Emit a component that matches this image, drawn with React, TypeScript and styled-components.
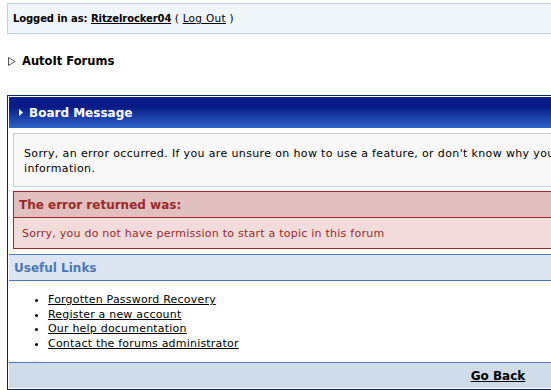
import React from 'react';
import styled, { createGlobalStyle } from 'styled-components';

const GlobalStyle = createGlobalStyle`
  html, body {
    margin: 0;
    padding: 0;
    overflow: hidden;
    background: #ffffff;
  }
  body {
    font-family: "DejaVu Sans", Verdana, sans-serif;
    font-size: 11px;
    color: #000;
  }
`;

const Page = styled.div`
  width: 980px;
  padding: 3px 0 0 7px;
`;

const UserBar = styled.div`
  height: 29px;
  line-height: 29px;
  padding: 0 5px;
  background: #f0f5fa;
  border: 1px solid #c2cfdf;
  font-size: 10.5px;
  letter-spacing: 0.2px;
`;

const Strong = styled.b`
  font-size: 10px;
  font-weight: bold;
  letter-spacing: -0.1px;
`;

const Link = styled.a<{ $bold?: boolean }>`
  color: #000;
  text-decoration: underline;
  font-weight: ${(p) => (p.$bold ? 'bold' : 'normal')};
  font-size: ${(p) => (p.$bold ? '10px' : '10.5px')};
  letter-spacing: ${(p) => (p.$bold ? '-0.1px' : '0.3px')};
`;

const ForumTitle = styled.div`
  display: flex;
  align-items: center;
  gap: 6px;
  margin: 18px 0 0 1px;
  height: 18px;
  font-size: 11.5px;
  font-weight: bold;
  color: #000;
`;

const Triangle = styled.svg`
  width: 8px;
  height: 9px;
`;

const Board = styled.div`
  margin-top: 25px;
  border: 1px solid #072a66;
  border-bottom-width: 2px;
  padding: 1px;
`;

const BoardHeader = styled.div`
  display: flex;
  align-items: center;
  gap: 6px;
  height: 31px;
  padding-left: 10px;
  background: linear-gradient(to bottom, #0c1f8f 0%, #071a86 30%, #2d62c6 100%);
  color: #fff;
  font-size: 12px;
  font-weight: bold;
`;

const Inner = styled.div`
  padding: 5px 0 0 4px;
`;

const MessageBox = styled.div`
  background: #f8f8f8;
  border: 1px solid #cccccc;
  border-right: none;
  padding: 12px 10px 10px 10px;
  line-height: 15px;
  letter-spacing: 0.36px;
`;

const ErrorBox = styled.div`
  margin-top: 4px;
  border: 1px solid #9a2a2a;
  border-right: none;
  color: #9a2a2a;
`;

const ErrorTitle = styled.div`
  display: flex;
  align-items: center;
  height: 25px;
  padding-left: 5px;
  background: #e2c0bf;
  border-bottom: 1px solid #9a2a2a;
  font-size: 12px;
  font-weight: bold;
`;

const ErrorText = styled.div`
  display: flex;
  align-items: center;
  height: 30px;
  padding-left: 8px;
  background: #f2dcdb;
  letter-spacing: 0.24px;
`;

const LinksHeader = styled.div`
  display: flex;
  align-items: center;
  margin-top: 5px;
  height: 25px;
  padding-left: 5px;
  background: #dde5f3;
  border-top: 1px solid #4e77c2;
  border-bottom: 1px solid #4e77c2;
  color: #4c77b6;
  font-size: 12px;
  font-weight: bold;
`;

const LinkList = styled.ul`
  margin: 0;
  padding: 12px 0 0 39px;
  height: 69px;
  line-height: 14.5px;
  list-style: disc;
  letter-spacing: 0.2px;
`;

const ListLink = styled.a`
  color: #000;
  text-decoration: underline;
`;

const Footer = styled.div`
  display: flex;
  align-items: center;
  justify-content: center;
  height: 25px;
  background: #d1dcea;
  border-top: 1px solid #4e77c2;
`;

const BackLink = styled.a`
  color: #000;
  font-size: 12px;
  font-weight: bold;
  text-decoration: underline;
  margin-left: 2px;
`;

const links = [
  'Forgotten Password Recovery',
  'Register a new account',
  'Our help documentation',
  'Contact the forums administrator',
];

export default function App() {
  return (
    <Page>
      <GlobalStyle />
      <UserBar>
        <Strong>Logged in as:</Strong> <Link $bold>Ritzelrocker04</Link> ( <Link>Log Out</Link> )
      </UserBar>
      <ForumTitle>
        <Triangle viewBox="0 0 8 9">
          <path d="M0.5 0.5 L7 4.5 L0.5 8.5 Z" fill="#fff" stroke="#555" strokeWidth="1" />
        </Triangle>
        AutoIt Forums
      </ForumTitle>
      <Board>
        <BoardHeader>
          <svg width="4" height="7" viewBox="0 0 4 7">
            <path d="M0 0 L4 3.5 L0 7 Z" fill="#fff" />
          </svg>
          Board Message
        </BoardHeader>
        <Inner>
          <MessageBox>
            Sorry, an error occurred. If you are unsure on how to use a feature, or don't know why you got this error message, try looking through the help files for more
            <br />
            information.
          </MessageBox>
          <ErrorBox>
            <ErrorTitle>The error returned was:</ErrorTitle>
            <ErrorText>Sorry, you do not have permission to start a topic in this forum</ErrorText>
          </ErrorBox>
        </Inner>
        <LinksHeader>Useful Links</LinksHeader>
        <LinkList>
          {links.map((l) => (
            <li key={l}>
              <ListLink>{l}</ListLink>
            </li>
          ))}
        </LinkList>
        <Footer>
          <BackLink>Go Back</BackLink>
        </Footer>
      </Board>
    </Page>
  );
}
